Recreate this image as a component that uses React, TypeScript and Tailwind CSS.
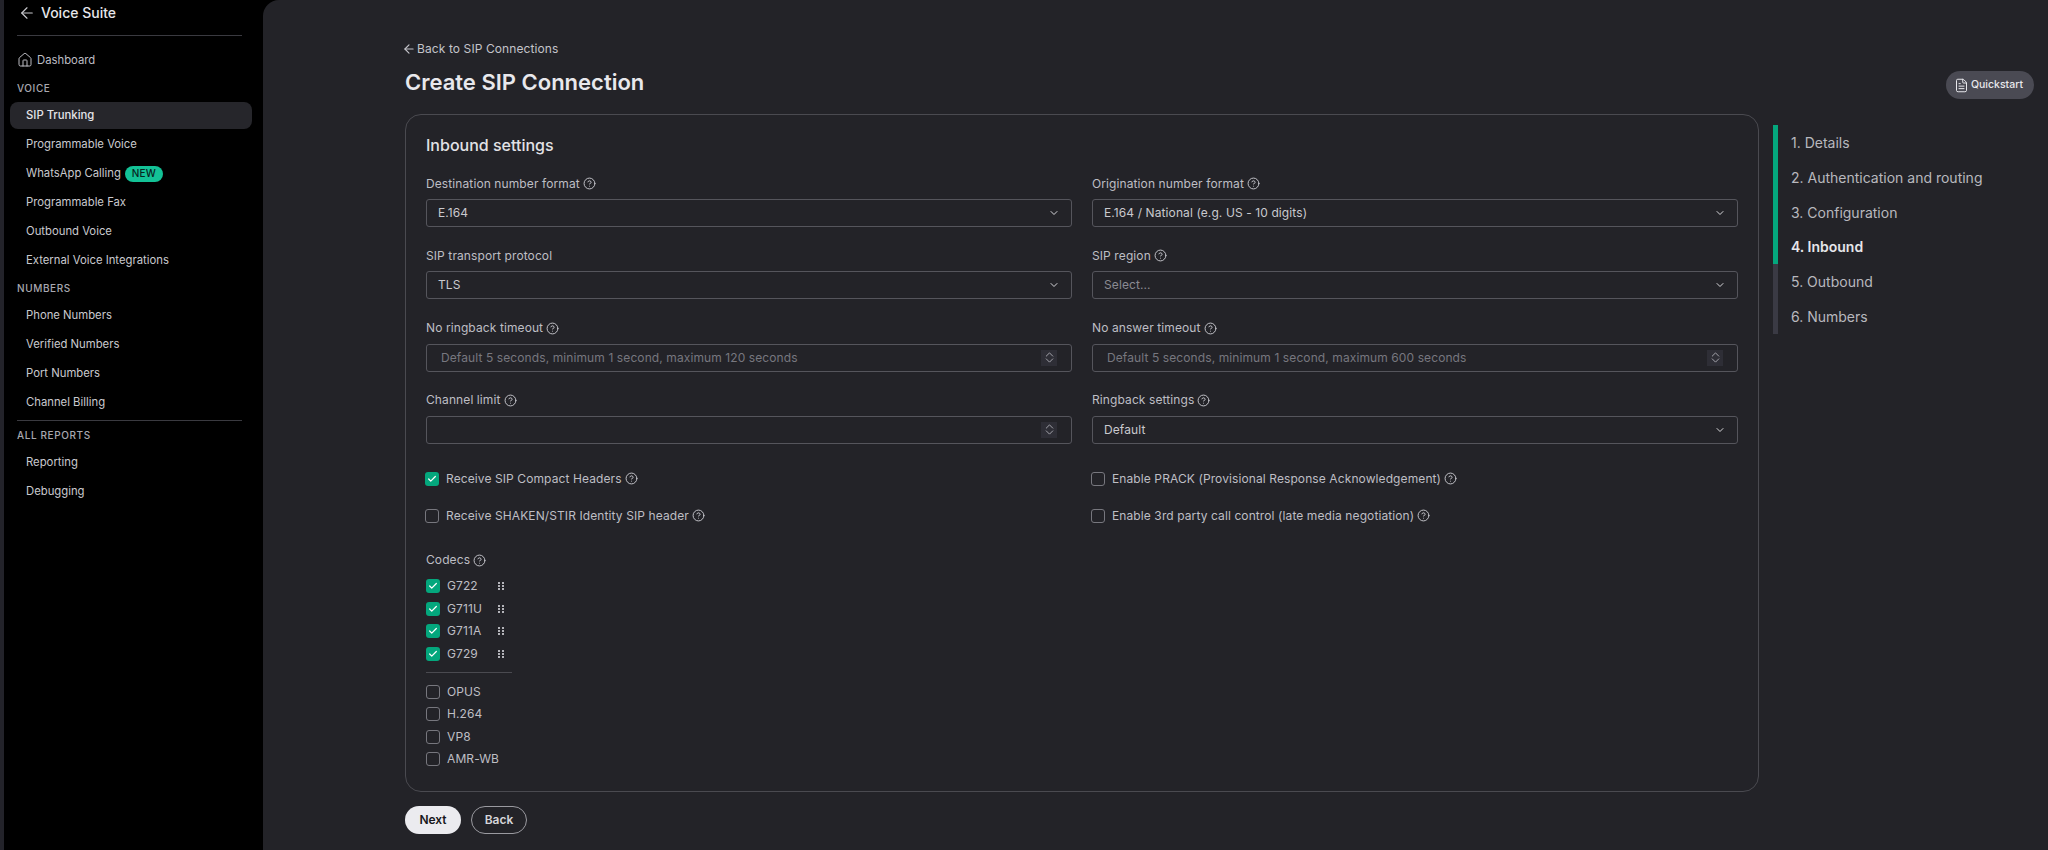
import { ArrowLeft, Check, ChevronDown, ChevronUp, CircleHelp, FileText, House } from "lucide-react";

const Help = () => <CircleHelp className="ml-[3px] h-[13px] w-[13px] shrink-0 text-[#c4c4cb]" strokeWidth={1.8} />;

const NavItem = ({ label, active, badge }: { label: string; active?: boolean; badge?: boolean }) => (
  <div
    className={`flex h-[27px] items-center rounded-lg pl-[16px] text-[11.3px] ${
      active ? "bg-[#26262b] font-medium text-[#e4e4e8]" : "text-[#c9c9ce]"
    }`}
  >
    {label}
    {badge && (
      <span className="ml-1 flex h-4 w-[38px] items-center justify-center rounded-full bg-[#13c296] text-[10px] font-medium tracking-[0.3px] text-[#08251e]">
        NEW
      </span>
    )}
  </div>
);

const Section = ({ label }: { label: string }) => (
  <div className="pl-[7px] text-[10px] font-medium leading-[14px] tracking-[0.06em] text-[#a8a8b0]">{label}</div>
);

const Sidebar = () => (
  <aside className="w-[259px] shrink-0 bg-black pl-[6px] pr-[11px]">
    <div className="ml-[7px] mr-[10px] flex h-[36px] items-start border-b border-[#3a3a40] pt-[4px]">
      <ArrowLeft className="ml-px h-[18px] w-[18px] text-[#c9c9ce]" strokeWidth={1.5} />
      <span className="ml-[5px] text-[14px] font-medium leading-[18px] text-[#e6e6ea]">Voice Suite</span>
    </div>
    <div className="mt-[15px] flex h-[18px] items-center pl-[7px] text-[11.3px] text-[#bdbdc3]">
      <House className="mr-[4px] h-4 w-4" strokeWidth={1.5} />
      Dashboard
    </div>
    <div className="mt-[12px]">
      <Section label="VOICE" />
    </div>
    <div className="mt-[7px] flex flex-col gap-[2px]">
      <NavItem label="SIP Trunking" active />
      <NavItem label="Programmable Voice" />
      <NavItem label="WhatsApp Calling" badge />
      <NavItem label="Programmable Fax" />
      <NavItem label="Outbound Voice" />
      <NavItem label="External Voice Integrations" />
    </div>
    <div className="mt-[7px]">
      <Section label="NUMBERS" />
    </div>
    <div className="mt-[7px] flex flex-col gap-[2px]">
      <NavItem label="Phone Numbers" />
      <NavItem label="Verified Numbers" />
      <NavItem label="Port Numbers" />
      <NavItem label="Channel Billing" />
    </div>
    <div className="ml-[7px] mr-[10px] mt-[4px] border-t border-[#3a3a40]" />
    <div className="mt-[7px]">
      <Section label="ALL REPORTS" />
    </div>
    <div className="mt-[7px] flex flex-col gap-[2px]">
      <NavItem label="Reporting" />
      <NavItem label="Debugging" />
    </div>
  </aside>
);

const FieldLabel = ({ label, help = true }: { label: string; help?: boolean }) => (
  <div className="flex h-[15px] items-center text-[12px] tracking-[0.1px] text-[#bebec4]">
    {label}
    {help && <Help />}
  </div>
);

const Select = ({ label, value, help, placeholder }: { label: string; value: string; help?: boolean; placeholder?: boolean }) => (
  <div>
    <FieldLabel label={label} help={help} />
    <div className="mt-[8px] flex h-[28px] items-center justify-between rounded-[3px] border border-[#55555c] pl-[11px] pr-[11px]">
      <span className={`text-[12px] tracking-[0.1px] ${placeholder ? "text-[#8a8a92]" : "text-[#c9c9ce]"}`}>{value}</span>
      <ChevronDown className="h-3 w-3 text-[#d6d6da]" strokeWidth={2} />
    </div>
  </div>
);

const NumberField = ({ label, placeholder }: { label: string; placeholder?: string }) => (
  <div>
    <FieldLabel label={label} />
    <div className="mt-[8px] flex h-[28px] items-center justify-between rounded-[3px] border border-[#55555c] pl-[14px] pr-[14px]">
      <span className="text-[12px] tracking-[0.1px] text-[#77777f]">{placeholder}</span>
      <span className="flex h-[16px] w-[16px] flex-col items-center justify-center bg-[#2e2e36] text-[#a6a6ad]">
        <ChevronUp className="h-[13px] w-[13px] shrink-0" strokeWidth={1.8} />
        <ChevronDown className="-mt-[7px] h-[13px] w-[13px] shrink-0" strokeWidth={1.8} />
      </span>
    </div>
  </div>
);

const Box = ({ checked }: { checked?: boolean }) =>
  checked ? (
    <span className="flex h-[14px] w-[14px] shrink-0 items-center justify-center rounded-[3px] bg-[#04a77d]">
      <Check className="h-[10px] w-[10px] text-white" strokeWidth={3} />
    </span>
  ) : (
    <span className="h-[14px] w-[14px] shrink-0 rounded-[3px] border border-[#77777e]" />
  );

const CheckRow = ({ label, checked }: { label: string; checked?: boolean }) => (
  <div className="flex h-[16px] items-center text-[12px] tracking-[0.1px] text-[#bebec4]">
    <span className="-ml-px mr-[7px] flex">
      <Box checked={checked} />
    </span>
    {label}
    <Help />
  </div>
);

const Grip = () => (
  <svg viewBox="0 0 6 8" className="h-[8px] w-[6px] text-[#b4b4ba]" fill="currentColor">
    <rect x="0" y="0" width="2" height="2" />
    <rect x="4" y="0" width="2" height="2" />
    <rect x="0" y="3" width="2" height="2" />
    <rect x="4" y="3" width="2" height="2" />
    <rect x="0" y="6" width="2" height="2" />
    <rect x="4" y="6" width="2" height="2" />
  </svg>
);

const Codec = ({ label, checked }: { label: string; checked?: boolean }) => (
  <div className="flex h-[22.6px] items-center whitespace-nowrap text-[12px] tracking-[0.1px] text-[#bebec4]">
    <Box checked={checked} />
    <span className="ml-[7px] w-[51px]">{label}</span>
    {checked && <Grip />}
  </div>
);

const steps = ["1. Details", "2. Authentication and routing", "3. Configuration", "4. Inbound", "5. Outbound", "6. Numbers"];

const Stepper = () => (
  <div className="ml-[14px] mt-[11px] flex h-[209px]">
    <div className="flex w-[5px] flex-col">
      <div className="h-[139px] bg-[#04a77d]" />
      <div className="flex-1 bg-[#3a3a44]" />
    </div>
    <div className="ml-[13px] flex flex-col justify-around">
      {steps.map((s, i) => (
        <div key={s} className={`text-[14px] ${i === 3 ? "font-semibold text-[#e6e6ea]" : "text-[#b8b8be]"}`}>
          {s}
        </div>
      ))}
    </div>
  </div>
);

export default function App() {
  return (
    <div className="flex h-[850px] w-[2048px] overflow-hidden bg-black font-['Inter',sans-serif]">
      <div className="w-[4px] shrink-0 bg-[#23232a]" />
      <Sidebar />
      <main className="min-w-0 flex-1 rounded-tl-2xl bg-[#232328] pl-[142px] pr-[14px]">
        <div className="flex items-start justify-between pt-[41px]">
          <div>
            <div className="flex h-[16px] items-center text-[12px] tracking-[0.1px] text-[#c4c4ca]">
              <ArrowLeft className="-ml-[3px] mr-px h-[14px] w-[14px]" />
              Back to SIP Connections
            </div>
            <h1 className="mt-[11px] text-[22px] font-semibold leading-[28px] text-[#e8e8ec]">Create SIP Connection</h1>
          </div>
          <div className="mt-[30px] flex h-[28px] w-[88px] items-center justify-center rounded-full bg-[#4a4a53] pr-[3px] text-[10.5px] font-medium text-[#e8e8ec]">
            <FileText className="mr-[2px] h-[15px] w-[15px]" strokeWidth={1.6} />
            Quickstart
          </div>
        </div>
        <div className="mt-[15px] flex items-start">
          <div className="w-[1354px] shrink-0">
            <section className="h-[678px] rounded-2xl border border-[#4a4a50] px-[20px] pt-[20px]">
              <h2 className="text-[16px] font-medium leading-[20px] text-[#e2e2e6]">Inbound settings</h2>
              <div className="mt-[21px] grid grid-cols-2 gap-x-[20px] gap-y-[21.3px]">
                <Select label="Destination number format" value="E.164" />
                <Select label="Origination number format" value="E.164 / National (e.g. US - 10 digits)" />
                <Select label="SIP transport protocol" value="TLS" help={false} />
                <Select label="SIP region" value="Select..." placeholder />
                <NumberField label="No ringback timeout" placeholder="Default 5 seconds, minimum 1 second, maximum 120 seconds" />
                <NumberField label="No answer timeout" placeholder="Default 5 seconds, minimum 1 second, maximum 600 seconds" />
                <NumberField label="Channel limit" />
                <Select label="Ringback settings" value="Default" />
              </div>
              <div className="mt-[27px] grid grid-cols-2 gap-x-[20px] gap-y-[21px]">
                <CheckRow label="Receive SIP Compact Headers" checked />
                <CheckRow label="Enable PRACK (Provisional Response Acknowledgement)" />
                <CheckRow label="Receive SHAKEN/STIR Identity SIP header" />
                <CheckRow label="Enable 3rd party call control (late media negotiation)" />
              </div>
              <div className="mt-[29px]">
                <FieldLabel label="Codecs" />
                <div className="mt-[7px] w-[86px]">
                  <Codec label="G722" checked />
                  <Codec label="G711U" checked />
                  <Codec label="G711A" checked />
                  <Codec label="G729" checked />
                  <div className="my-[7px] border-t border-[#4a4a50]" />
                  <Codec label="OPUS" />
                  <Codec label="H.264" />
                  <Codec label="VP8" />
                  <Codec label="AMR-WB" />
                </div>
              </div>
            </section>
            <div className="mt-[14px] flex gap-[10px]">
              <div className="flex h-[28px] w-[56px] items-center justify-center rounded-full bg-[#ebebef] text-[12px] font-semibold text-[#17171a]">
                Next
              </div>
              <div className="flex h-[28px] w-[56px] items-center justify-center rounded-full border border-[#9a9aa0] text-[12px] font-semibold text-[#d6d6da]">
                Back
              </div>
            </div>
          </div>
          <Stepper />
        </div>
      </main>
    </div>
  );
}
